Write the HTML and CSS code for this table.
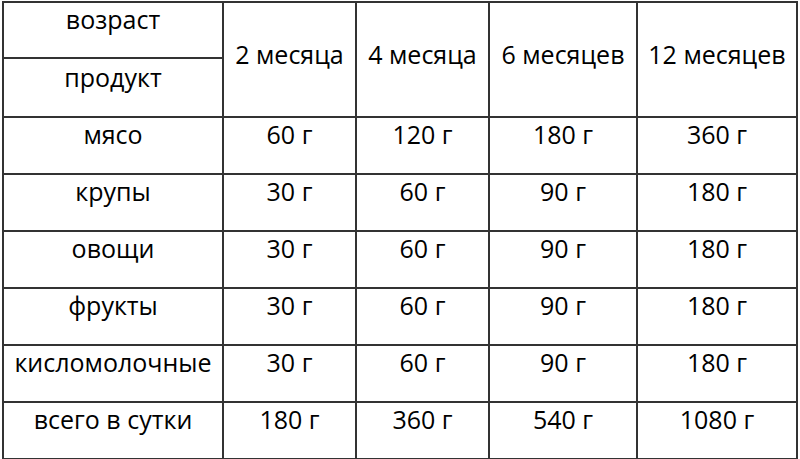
FILE: index.html
```html
<!DOCTYPE html>
<html lang="ru">
<head>
<meta charset="utf-8">
<title>Нормы</title>
<link rel="stylesheet" href="styles.css">
</head>
<body>
<table class="grid">
  <colgroup>
    <col class="c0"><col class="c1"><col class="c2"><col class="c3"><col class="c4">
  </colgroup>
  <tr class="h1">
    <td class="age">возраст</td>
    <td class="month" rowspan="2">2 месяца</td>
    <td class="month" rowspan="2">4 месяца</td>
    <td class="month" rowspan="2">6 месяцев</td>
    <td class="month" rowspan="2">12 месяцев</td>
  </tr>
  <tr class="h2">
    <td class="prod">продукт</td>
  </tr>
  <tr class="r"><td>мясо</td><td>60 г</td><td>120 г</td><td>180 г</td><td>360 г</td></tr>
  <tr class="r"><td>крупы</td><td>30 г</td><td>60 г</td><td>90 г</td><td>180 г</td></tr>
  <tr class="r"><td>овощи</td><td>30 г</td><td>60 г</td><td>90 г</td><td>180 г</td></tr>
  <tr class="r"><td>фрукты</td><td>30 г</td><td>60 г</td><td>90 г</td><td>180 г</td></tr>
  <tr class="r"><td>кисломолочные</td><td>30 г</td><td>60 г</td><td>90 г</td><td>180 г</td></tr>
  <tr class="r"><td>всего в сутки</td><td>180 г</td><td>360 г</td><td>540 г</td><td>1080 г</td></tr>
</table>
</body>
</html>
```
FILE: styles.css
```css
html, body {
  margin: 0;
  padding: 0;
  background: #ffffff;
}
body {
  padding: 1px 0 0 2px;
}
.grid {
  border-collapse: collapse;
  table-layout: fixed;
  width: 796px;
  font-family: "Open Sans", "DejaVu Sans", sans-serif;
  font-size: 25px;
  font-weight: 500;
  color: #000000;
}
.c0 { width: 220px; }
.c1 { width: 133px; }
.c2 { width: 133px; }
.c3 { width: 148px; }
.c4 { width: 160px; }
.grid td {
  border: 2px solid #333333;
  text-align: center;
  vertical-align: top;
  padding: 0;
  line-height: 32px;
  white-space: nowrap;
}
.h1 { height: 56px; }
.h2 { height: 59px; }
.r { height: 57px; }
.grid .month { padding-top: 35px; }
.grid .prod { padding-top: 2px; }
```
